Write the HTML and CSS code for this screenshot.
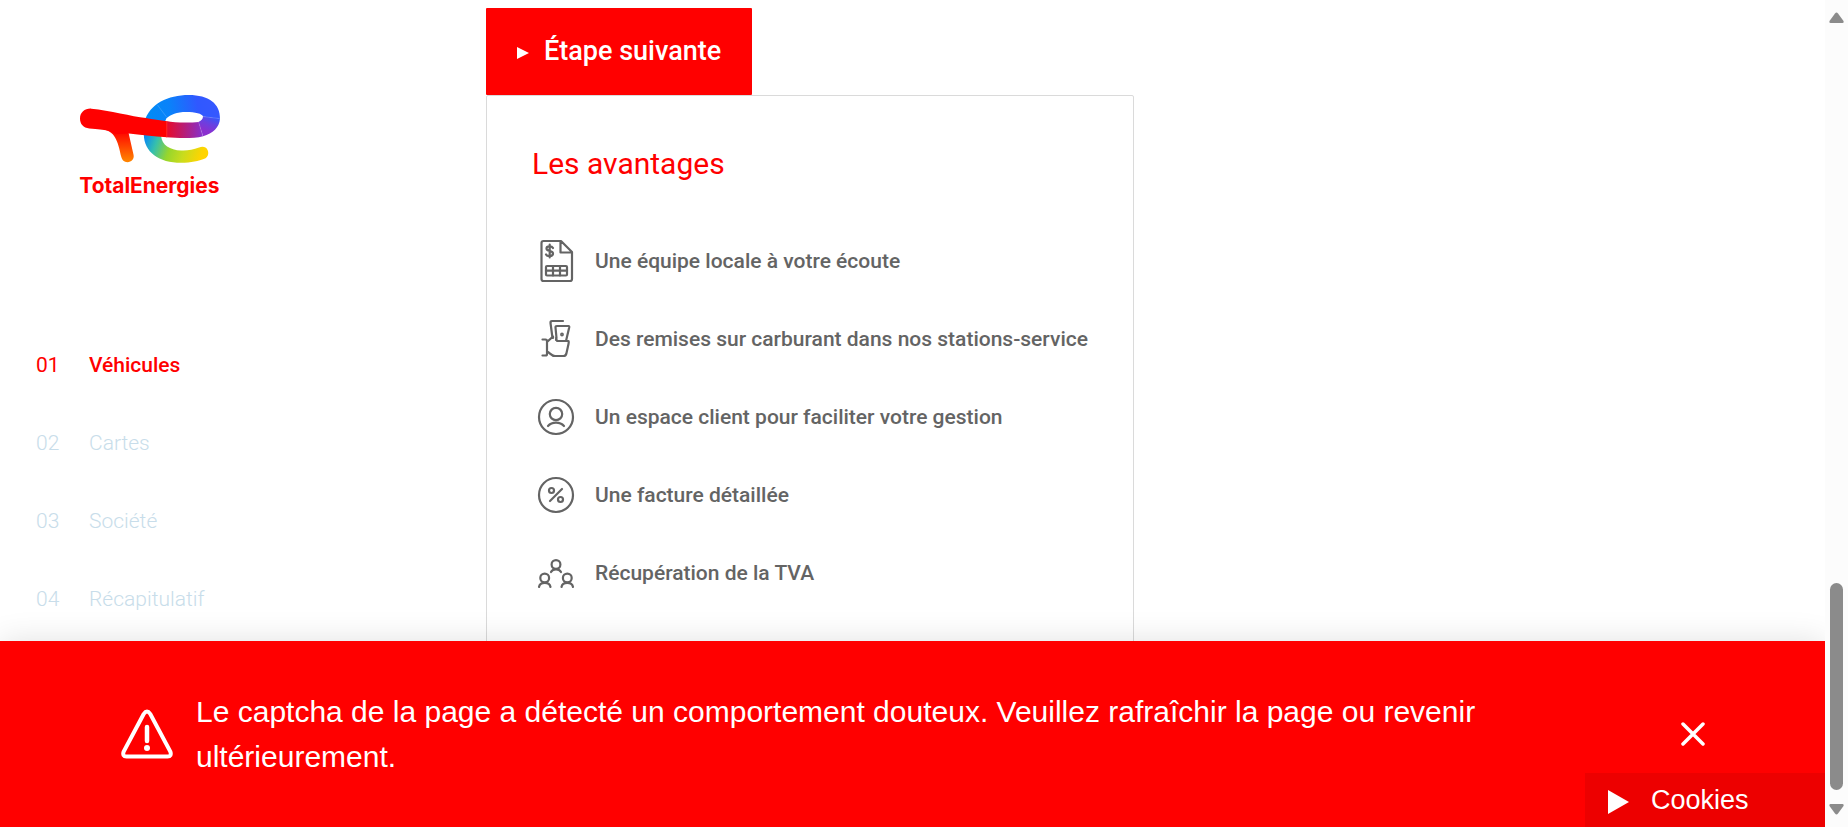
FILE: index.html
```html
<!DOCTYPE html>
<html lang="fr">
<head>
<meta charset="utf-8">
<title>TotalEnergies – Véhicules</title>
<link rel="stylesheet" href="styles.css">
</head>
<body>
<div class="shell">
  <div class="page">
    <aside class="sidebar">
      <a class="logo" href="#" aria-label="TotalEnergies">
        <svg viewBox="60 42 424 312" role="img">
          <defs>
            <linearGradient id="top" gradientUnits="userSpaceOnUse" x1="260" y1="120" x2="470" y2="90"><stop offset="0" stop-color="#008cf5"/><stop offset=".35" stop-color="#0a82fa"/><stop offset=".75" stop-color="#3058ff"/><stop offset="1" stop-color="#3558ff"/></linearGradient>
            <linearGradient id="turn" gradientUnits="userSpaceOnUse" x1="458" y1="105" x2="438" y2="150"><stop offset="0" stop-color="#3358fc"/><stop offset=".5" stop-color="#6a40e0"/><stop offset="1" stop-color="#8a30cf"/></linearGradient>
            <linearGradient id="bar" gradientUnits="userSpaceOnUse" x1="320" y1="0" x2="430" y2="0"><stop offset="0" stop-color="#ea0a28"/><stop offset=".45" stop-color="#bb1c70"/><stop offset="1" stop-color="#8430d0"/></linearGradient>
            <linearGradient id="tail" gradientUnits="userSpaceOnUse" x1="258" y1="165" x2="425" y2="225"><stop offset="0" stop-color="#0a8cf0"/><stop offset=".2" stop-color="#35bfae"/><stop offset=".45" stop-color="#97d62c"/><stop offset=".7" stop-color="#c8dc1e"/><stop offset="1" stop-color="#ffd400"/></linearGradient>
            <linearGradient id="leg" gradientUnits="userSpaceOnUse" x1="0" y1="150" x2="0" y2="240"><stop offset="0" stop-color="#f00"/><stop offset="1" stop-color="#ff8200"/></linearGradient>
          </defs>
          <path fill="url(#tail)" d="M252 160C252 214 298 246 364 246C394 246 418 241 434 234C445 229 448 218 444 208C439 197 428 196 418 200C400 207 382 210 364 209C330 207 306 192 304 165Z"/>
          <path fill="url(#top)" d="M254 122C270 68 325 42 387 42C447 42 482 68 481 114L430 107C428 98 406 93 380 93C350 93 333 101 320 112L310 135H254Z"/>
          <path fill="url(#turn)" d="M481 113C479 140 460 158 430 166L416 123C424 120 430 115 430 106Z"/>
          <path fill="url(#bar)" d="M320 120C345 126 390 126 417 123L430 166C400 174 355 172 319 169Z"/>
          <path fill="url(#leg)" d="M130 146L205 152L221 222C224 235 214 244 203 244C192 244 187 238 184 228C176 195 170 151 130 146Z"/>
          <path fill="red" d="M94 83C150 88 215 106 258 111C280 115 300 118 322 121V169C280 167 240 162 207 158L165 160C155 150 140 147 88 143C70 141 60 130 60 113C60 94 75 82 94 83Z"/>
          <path d="M293 72L320 108M430 107L481 113M417 124L429 165M321 121V169" fill="none" stroke="#fff" stroke-opacity=".25" stroke-width="2"/>
          <text class="logo-name" x="58" y="336">TotalEnergies</text>
        </svg>
      </a>
      <nav>
        <ol class="steps">
          <li class="step step-active"><span class="step-number">01</span><span>Véhicules</span></li>
          <li class="step"><span class="step-number">02</span><span>Cartes</span></li>
          <li class="step"><span class="step-number">03</span><span>Société</span></li>
          <li class="step"><span class="step-number">04</span><span>Récapitulatif</span></li>
        </ol>
      </nav>
    </aside>

    <main class="content">
      <button class="next" type="button">
        <svg class="next-arrow" viewBox="0 0 12 12" aria-hidden="true"><path d="M0 0L12 6L0 12Z" fill="currentColor"/></svg>
        Étape suivante
      </button>
      <section class="card">
        <h2 class="card-title">Les avantages</h2>
        <ul class="benefits">
          <li class="benefit">
            <svg class="icon" viewBox="0 0 44 44" aria-hidden="true"><path d="M9.500 2H27L38 13V40A2 2 0 0 1 36 42H9.500A2 2 0 0 1 7.500 40V4A2 2 0 0 1 9.500 2ZM26.500 2.500V13.500H37.500"/><rect x="12" y="27" width="21" height="9.500" rx="1"/><path d="M12 31.700H33M19 27V36.500M26 27V36.500M19 9C18 7 12.500 6.500 12.500 9.500C12.500 13 19 11 19 14.500C19 18 13 17.500 12 15.500M15.700 5.500V18.500"/></svg>
            Une équipe locale à votre écoute
          </li>
          <li class="benefit">
            <svg class="icon" viewBox="0 0 44 44" aria-hidden="true"><path d="M8.500 22.500H11.500Q13 22.500 13 24V37Q13 38.500 11.500 38.500H8.500M13 25L19 19.500V21M18.500 21L16.500 6Q16.300 4 18 4H29M22 23L22.500 21L21.500 10.500Q21.300 9 23 9H34.500Q35.500 9 35.200 10.500L32 24H23L22 21M32 24H34.500Q35 25 34.500 27L32.500 36Q32 39 29.500 39H21C17 39 16 35.500 13 34.500"/><circle cx="28" cy="17.500" r=".8"/></svg>
            Des remises sur carburant dans nos stations-service
          </li>
          <li class="benefit">
            <svg class="icon" viewBox="0 0 44 44" aria-hidden="true"><circle cx="22" cy="22" r="17"/><circle cx="22" cy="19" r="6.200"/><path d="M14 31C18 26.500 26 26.500 30 31"/></svg>
            Un espace client pour faciliter votre gestion
          </li>
          <li class="benefit">
            <svg class="icon" viewBox="0 0 44 44" aria-hidden="true"><circle cx="22" cy="22" r="17"/><circle cx="17.500" cy="17.500" r="2.500"/><circle cx="26.500" cy="26.500" r="2.500"/><path d="M28 16L16 28"/></svg>
            Une facture détaillée
          </li>
          <li class="benefit">
            <svg class="icon" viewBox="0 0 44 44" aria-hidden="true"><circle cx="22" cy="13.500" r="4.400"/><path d="M17 21C19 17.500 25 17.500 27 21"/><circle cx="10.700" cy="27" r="4.400"/><path d="M5 36C6 30.500 15.500 30.500 16.500 36"/><circle cx="33.300" cy="27" r="4.400"/><path d="M27.500 36C28.500 30.500 38 30.500 39 36"/></svg>
            Récupération de la TVA
          </li>
        </ul>
      </section>
    </main>

    <div class="alert" role="alert">
      <svg class="alert-icon" viewBox="0 0 52 50" aria-hidden="true"><path d="M22.700 5L2.700 42.500Q1 47.500 5.500 47.500H46.500Q51 47.500 49.300 42.500L29.300 5Q26 0 22.700 5Z" fill="none" stroke="currentColor" stroke-width="4"/><path d="M26 18V32" stroke="currentColor" stroke-width="4.500" stroke-linecap="round"/><circle cx="26" cy="39" r="3" fill="currentColor"/></svg>
      <p class="alert-text">Le captcha de la page a détecté un comportement douteux. Veuillez rafraîchir la page ou revenir ultérieurement.</p>
      <button class="alert-close" type="button" aria-label="Fermer">
        <svg viewBox="0 0 24 24" aria-hidden="true"><path d="M2 2L22 22M22 2L2 22" stroke="currentColor" stroke-width="3.500" stroke-linecap="round"/></svg>
      </button>
    </div>
    <button class="cookies" type="button">
      <svg viewBox="0 0 21 24" aria-hidden="true"><path d="M0 0L21 12L0 24Z" fill="currentColor"/></svg>
      Cookies
    </button>
  </div>

  <div class="scrollbar" aria-hidden="true">
    <svg viewBox="0 0 15 11"><path d="M6 1.500Q7.500 -.5 9 1.500L14.500 9Q15 11 13.500 11H1.500Q0 11 .5 9Z"/></svg>
    <div class="scroll-track"><div class="scroll-thumb"></div></div>
    <svg viewBox="0 0 15 11"><path d="M6 9.500Q7.500 11.500 9 9.500L14.500 2Q15 0 13.500 0H1.500Q0 0 .5 2Z"/></svg>
  </div>
</div>
</body>
</html>
```
FILE: styles.css
```css
* {
  box-sizing: border-box;
}

body {
  margin: 0;
  background: #fff;
  color: #646464;
  font-family: Roboto, "Liberation Sans", sans-serif;
}

button {
  border: 0;
  cursor: pointer;
}

.shell {
  display: flex;
  height: 100vh;
  overflow: hidden;
}

.page {
  position: relative;
  display: flex;
  flex: 1;
  overflow: hidden;
}

.sidebar {
  flex: 0 0 486px;
  padding: 95px 36px 0;
}

.logo {
  display: block;
  width: 141px;
  margin-left: 44px;
}

.logo svg {
  display: block;
  width: 100%;
  overflow: visible;
}

.logo-name {
  fill: #f00;
  font-family: Inter, sans-serif;
  font-size: 63px;
  font-weight: 700;
}

.steps {
  margin: 127px 0 0;
  padding: 0;
  list-style: none;
}

.step {
  display: flex;
  height: 78px;
  align-items: center;
  color: #c8ddea;
  font-size: 21px;
  font-weight: 300;
}

.step-number {
  width: 53px;
}

.step-active {
  color: #f00;
  font-weight: 500;
}

.step-active .step-number {
  font-weight: 400;
}

.content {
  display: flex;
  flex: 1;
  flex-direction: column;
  align-items: flex-start;
  padding-top: 8px;
}

.next {
  display: flex;
  flex: none;
  align-items: center;
  gap: 15px;
  height: 87px;
  padding: 0 31px 2px;
  border-radius: 1px;
  background: #f00;
  color: #fff;
  font-family: inherit;
  font-size: 27px;
  font-weight: 500;
}

.next-arrow {
  width: 12px;
  height: 12px;
  margin-top: 4px;
}

.card {
  flex: none;
  padding: 44px 45px 80px;
  border: 1px solid #dadada;
  border-radius: 2px;
}

.card-title {
  margin: 0 0 34px;
  color: #f00;
  font-size: 30px;
  font-weight: 400;
  line-height: 48px;
}

.benefits {
  margin: 0;
  padding: 0;
  list-style: none;
}

.benefit {
  display: flex;
  height: 78px;
  align-items: center;
  gap: 17px;
  padding-left: 2px;
  font-size: 21px;
  font-weight: 500;
}

.icon {
  flex: none;
  width: 44px;
  height: 44px;
  fill: none;
  stroke: #646464;
  stroke-width: 2.2;
  stroke-linecap: round;
  stroke-linejoin: round;
}

.alert {
  position: absolute;
  right: 0;
  bottom: 0;
  left: 0;
  display: flex;
  align-items: center;
  padding: 48px 120px 48px 121px;
  background: #f00;
  box-shadow: 0 0 30px rgba(0, 0, 0, 0.12);
  color: #fff;
}

.alert-icon {
  flex: none;
  width: 52px;
  height: 50px;
  margin-right: 23px;
}

.alert-text {
  flex: 1;
  margin: 0 184px 0 0;
  font-family: "Liberation Sans", Arial, sans-serif;
  font-size: 30px;
  line-height: 45px;
}

.alert-close {
  flex: none;
  width: 24px;
  height: 24px;
  padding: 0;
  background: none;
  color: #fff;
}

.alert-close svg {
  display: block;
}

.cookies {
  position: absolute;
  right: 0;
  bottom: 0;
  display: flex;
  align-items: center;
  gap: 22px;
  width: 240px;
  height: 54px;
  padding: 0 23px;
  background: #ed0000;
  color: #fff;
  font-family: "Liberation Sans", Arial, sans-serif;
  font-size: 27px;
}

.cookies svg {
  width: 21px;
  height: 24px;
  margin-top: 4px;
}

.scrollbar {
  display: flex;
  flex: 0 0 23px;
  flex-direction: column;
  align-items: center;
  padding: 12px 0;
  background: #fcfcfc;
}

.scrollbar svg {
  width: 15px;
  height: 11px;
  fill: #8b8b8b;
}

.scroll-track {
  display: flex;
  flex: 1;
  flex-direction: column;
  justify-content: flex-end;
  padding-bottom: 14px;
}

.scroll-thumb {
  width: 13px;
  height: 27%;
  border-radius: 7px;
  background: #8b8b8b;
}
```
